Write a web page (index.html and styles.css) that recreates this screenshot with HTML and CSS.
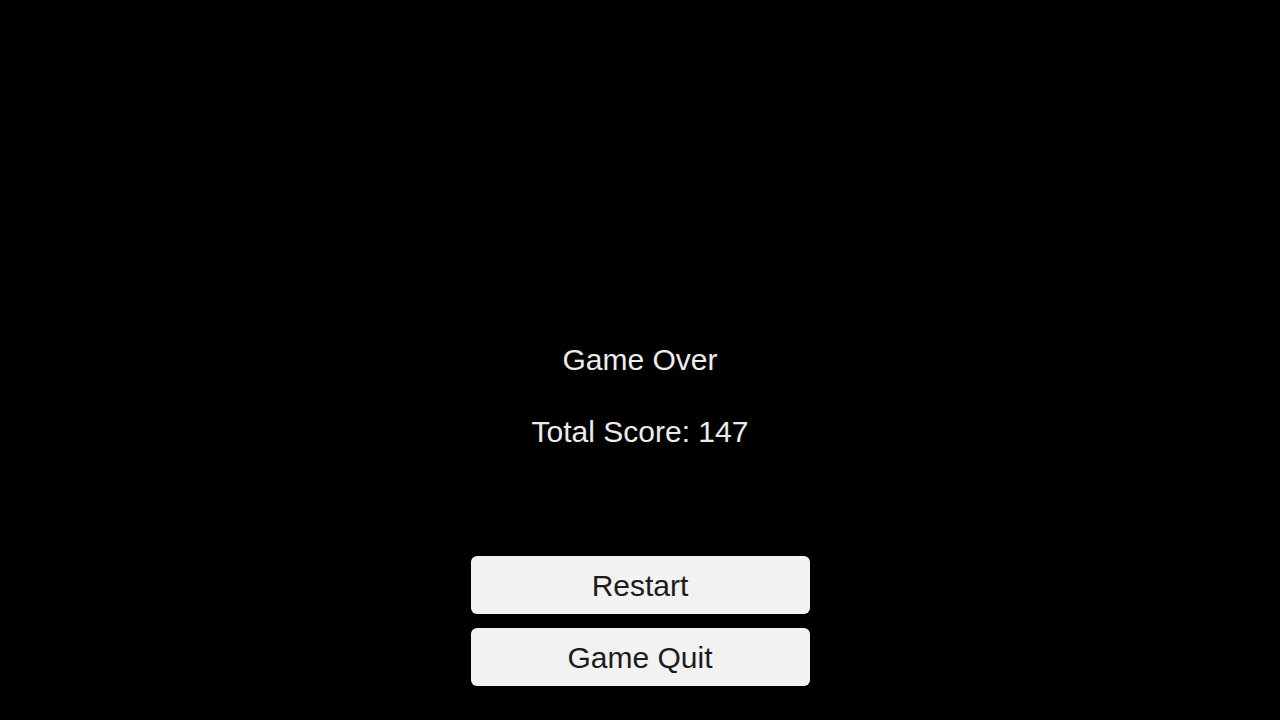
FILE: index.html
```html
<!DOCTYPE html>
<html>
<head>
    <title>Game Over</title>
    <link rel="stylesheet" href="styles.css">
</head>
<body>
    <div class="screen">
        <div class="result">
            <p class="result-line">Game Over</p>
            <p class="result-line">Total Score: 147</p>
        </div>
        <div class="menu">
            <button class="menu-button" type="button">Restart</button>
            <button class="menu-button" type="button">Game Quit</button>
        </div>
    </div>
</body>
</html>
```

FILE: styles.css
```css
body {
    margin: 0;
    background-color: #000000;
    font-family: 'Liberation Sans', Arial, sans-serif;
}

.screen {
    display: flex;
    flex-direction: column;
    align-items: center;
    height: 720px;
    padding-top: 342px;
    box-sizing: border-box;
}

.result {
    display: flex;
    flex-direction: column;
    align-items: center;
    gap: 36px;
}

.result-line {
    margin: 0;
    color: #ececec;
    font-size: 30px;
    line-height: 36px;
}

.menu {
    display: flex;
    flex-direction: column;
    gap: 14px;
    margin-top: 106px;
}

.menu-button {
    width: 339px;
    height: 58px;
    border: none;
    border-radius: 6px;
    background-color: #f2f2f2;
    color: #1c1c1c;
    font-family: 'Liberation Sans', Arial, sans-serif;
    font-size: 30px;
    padding: 2px 0 0;
    cursor: pointer;
}
```
